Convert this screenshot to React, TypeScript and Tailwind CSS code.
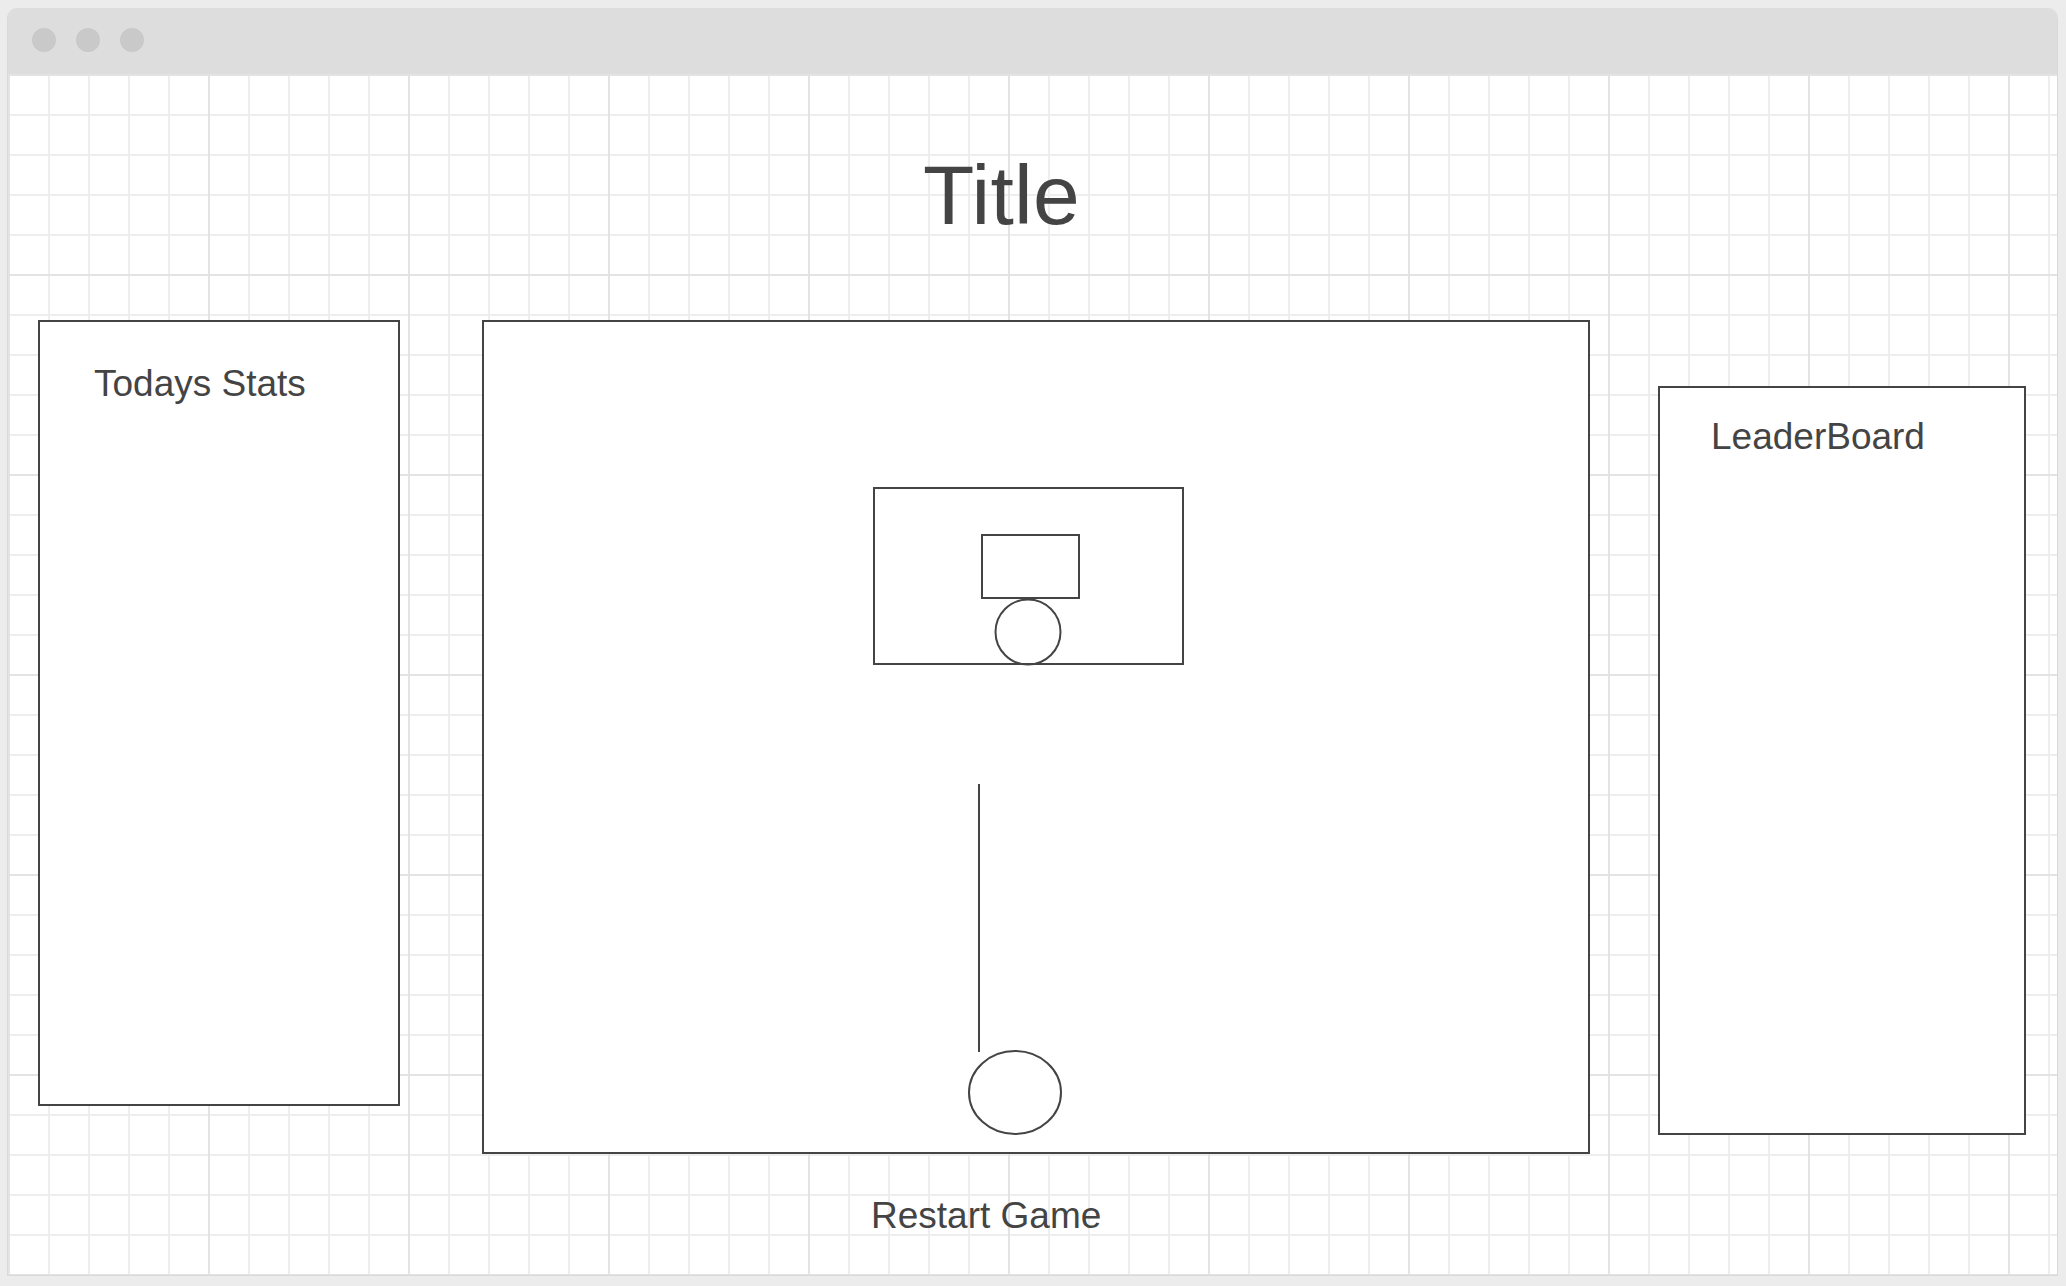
import React from 'react';

const gridBg =
    'bg-[linear-gradient(to_right,#e3e3e3_2px,transparent_2px),linear-gradient(to_bottom,#e3e3e3_2px,transparent_2px),linear-gradient(to_right,#eeeeee_2px,transparent_2px),linear-gradient(to_bottom,#eeeeee_2px,transparent_2px)] bg-[size:200px_200px,200px_200px,40px_40px,40px_40px]';

// the hoop, aim line and ball drawn inside the play area
const Court: React.FC = () => (
    <svg width="1104" height="830" viewBox="0 0 1104 830" className="block">
        <g fill="none" stroke="#444444" strokeWidth="2">
            <rect x="390" y="166" width="309" height="176" />
            <rect x="498" y="213" width="97" height="63" />
            <circle cx="544" cy="310" r="32.5" />
            <line x1="495" y1="462" x2="495" y2="730" />
            <ellipse cx="531" cy="770.5" rx="46" ry="41.5" />
        </g>
    </svg>
);

export default function App() {
    return (
        <div className="w-[2066px] h-[1286px] bg-[#ececec] pt-[8px] pl-[7px] font-['Liberation_Sans',Arial,sans-serif] text-[#444444]">
            <div className="w-[2051px] h-[1268px] border border-t-0 border-[#d9d9d9] rounded-t-[10px] overflow-hidden flex flex-col">
                {/* Window chrome */}
                <div className="h-[66px] bg-[#dddddd] flex items-start gap-[20px] pl-[24px] pt-[20px] shrink-0">
                    <div className="w-[24px] h-[24px] rounded-full bg-[#c9c9c9]"></div>
                    <div className="w-[24px] h-[24px] rounded-full bg-[#c9c9c9]"></div>
                    <div className="w-[24px] h-[24px] rounded-full bg-[#c9c9c9]"></div>
                </div>

                {/* Canvas */}
                <div className={`flex-1 bg-white ${gridBg} flex flex-col`}>
                    <h1 className="pl-[915px] pt-[79px] text-[84px] leading-none font-normal tracking-[0.3px]">Title</h1>

                    <div className="flex items-start pl-[30px] mt-[83px]">
                        <div className="w-[362px] h-[786px] border-2 border-[#444444] bg-white pl-[54px] pt-[43px]">
                            <div className="text-[37px] leading-none">Todays Stats</div>
                        </div>

                        <div className="flex flex-col ml-[82px]">
                            <div className="w-[1108px] h-[834px] border-2 border-[#444444] bg-white">
                                <Court />
                            </div>
                            <div className="pl-[389px] mt-[43px] text-[37px] leading-none">Restart Game</div>
                        </div>

                        <div className="w-[368px] h-[749px] ml-[68px] mt-[66px] border-2 border-[#444444] bg-white pl-[51px] pt-[30px]">
                            <div className="text-[37px] leading-none">LeaderBoard</div>
                        </div>
                    </div>
                </div>
            </div>
        </div>
    );
}
